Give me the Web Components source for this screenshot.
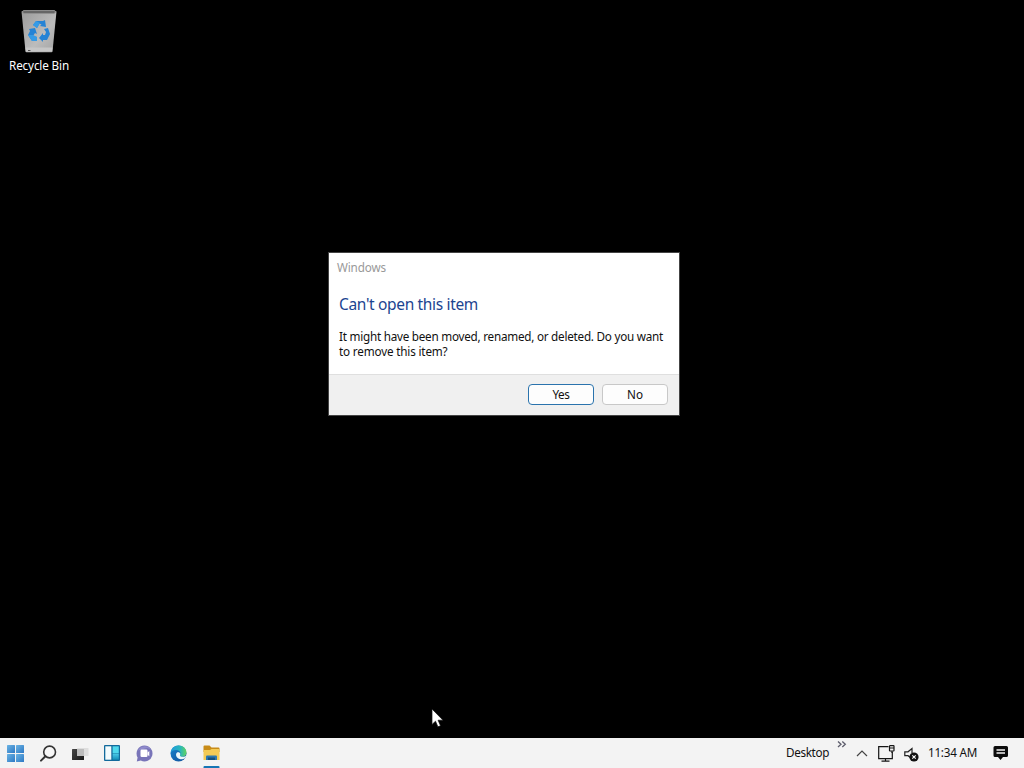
<!DOCTYPE html>
<html lang="en">
<head>
<meta charset="utf-8">
<title>Desktop</title>
<style>
html,body{margin:0;height:100%;overflow:hidden;background:#000}
body{font-family:"Noto Sans","Open Sans",sans-serif;font-size:11.7px}
</style>
</head>
<body>
<desk-top></desk-top>
<script>
const define = (name, html, init) => {
  const t = document.createElement('template');
  t.innerHTML = html;
  customElements.define(name, class extends HTMLElement {
    constructor() {
      super();
      this.attachShadow({mode: 'open'}).append(t.content.cloneNode(true));
    }
    connectedCallback() { if (init) init.call(this); }
  });
};

const icons = {
  start: `<svg width="17" height="17" viewBox="0 0 17 17"><defs><linearGradient id="g" x2="1" y2="1"><stop stop-color="#6bb4e4"/><stop offset="1" stop-color="#2d78c4"/></linearGradient></defs><g fill="url(#g)"><rect width="8" height="8" rx=".5"/><rect x="9" width="8" height="8" rx=".5"/><rect y="9" width="8" height="8" rx=".5"/><rect x="9" y="9" width="8" height="8" rx=".5"/></g></svg>`,
  search: `<svg width="17" height="17" viewBox="0 0 17 17"><circle cx="9.6" cy="7" r="5.9" fill="#f7f7f7" stroke="#333" stroke-width="1.6"/><path d="M5.4 11.200 1 15.6" stroke="#333" stroke-width="2" stroke-linecap="round"/></svg>`,
  tasks: `<svg width="17" height="12" viewBox="0 0 17 12"><defs><linearGradient id="a" x2="1" y2="1"><stop stop-color="#454545"/><stop offset="1" stop-color="#191919"/></linearGradient></defs><rect y="1" width="12" height="11" rx=".6" fill="url(#a)"/><rect x="5" width="11.500" height="8" rx=".6" fill="#dedede"/><path d="M5 1h7v7H5z" fill="#bcbcbc"/></svg>`,
  widgets: `<svg width="16" height="16" viewBox="0 0 16 16"><defs><linearGradient id="w" x2="0" y2="1"><stop stop-color="#47c6e5"/><stop offset="1" stop-color="#148fb8"/></linearGradient></defs><rect width="16" height="16" rx="1" fill="#126a9c"/><rect x="1.300" y="1.300" width="6" height="13.400" fill="#f3fbfd"/><rect x="8.600" y="1.300" width="6.200" height="7.200" fill="#4fd8ec"/><rect x="8.600" y="9" width="6.200" height="5.700" fill="url(#w)"/></svg>`,
  chat: `<svg width="17" height="17" viewBox="0 0 17 17"><path d="M8.500.5a8 8 0 1 1-3.700 15.100L.8 16.500l.8-4A8 8 0 0 1 8.500.5z" fill="#7874b8"/><path d="M2 5.500A7.500 7.500 0 0 1 15 4.500L11 3z" fill="#8f8acb"/><rect x="4.500" y="4.500" width="7" height="7.500" rx="1.200" fill="#fff"/><path d="m11.500 7.400 1.800-1.500v5.300l-1.800-1.500z" fill="#fff"/></svg>`,
  edge: `<svg width="17" height="17" viewBox="0 0 17 17"><defs><linearGradient id="e" x1="0" x2="1"><stop stop-color="#2198dc"/><stop offset=".6" stop-color="#27b7bb"/><stop offset="1" stop-color="#63d35c"/></linearGradient><linearGradient id="f" x2="1" y2="1"><stop stop-color="#1683ce"/><stop offset="1" stop-color="#124f99"/></linearGradient></defs><circle cx="8.500" cy="8.500" r="8" fill="url(#f)"/><path d="M.6 8C1 3.500 4.200.5 8.500.5c4.800 0 8 3.300 8 7 0 2.800-2 4.300-4.400 4.300-1.600 0-2.500-.6-2.500-1.300s.9-.9.9-2.100C10.500 6.500 8.600 5 6 5 3.300 5 1.300 6.300.6 8z" fill="url(#e)"/><path d="M7 7.600c-1.900 1.600-.9 5.700 2.600 6.500 2 .5 4.100-.1 5.700-1.100l1.200-2.500c-1.400 1.300-4 1.600-5.600 1-1.500-.5-.8-1.300-.6-2.400C10.500 7.500 8 7 7 7.600z" fill="#eaf6fa"/></svg>`,
  files: `<svg width="17" height="24" viewBox="0 0 17 24"><path d="M.5 1.500q0-1 1-1h5l2 2h7q1 0 1 1V7H.5z" fill="#c88b18"/><path d="M.5 5H7l1.500-1h7q1 0 1 1v10H.5z" fill="#f3cb55"/><path d="M3 15V11.500q0-1 1-1h9q1 0 1 1V15z" fill="#2a78b0"/><path d="M5 12.500h7V15H5z" fill="#16507c"/><rect y="21" x=".5" width="16" height="2.500" rx="1" fill="#1676b5"/></svg>`,
  more: `<svg width="10" height="7" viewBox="0 0 10 7" fill="none" stroke="#5d5d6c" stroke-width="1.300"><path d="m1 .6 3 2.700-3 2.700M5.300.6l3 2.700-3 2.700"/></svg>`,
  up: `<svg width="12" height="7" viewBox="0 0 12 7"><path d="m1 6 5-5 5 5" fill="none" stroke="#444" stroke-width="1.200"/></svg>`,
  network: `<svg width="17" height="17" viewBox="0 0 17 17" fill="none" stroke="#151515" stroke-width="1.200"><path d="M10.500 1.600H.7v12h13.600V7M7.500 13.600v2.500M3.500 16.200h8"/><rect x="11.500" y=".7" width="4.500" height="5.300" rx=".5"/><path d="M11.500 3H16M14 6v2"/></svg>`,
  volume: `<svg width="15" height="15" viewBox="0 0 15 15"><path d="M7 11 4 8.700H.8V4.800H4l4-3.300V6" fill="none" stroke="#222" stroke-width="1.200"/><circle cx="10" cy="10" r="4.600" fill="#111"/><path d="m8.300 8.300 3.400 3.400m0-3.400-3.400 3.400" stroke="#fff" stroke-width="1.100"/></svg>`,
  notice: `<svg width="16" height="16" viewBox="0 0 16 16"><path d="M2 1h11.500q1.500 0 1.500 1.500v8q0 1.500-1.500 1.500H10l-2.500 3L5 12H2Q.5 12 .5 10.500v-8Q.5 1 2 1z" fill="#0c0c0c"/><path d="M3.500 5h8.500M3.500 8h8.500" stroke="#f3f3f3" stroke-width="1.300"/></svg>`,
  bin: `<svg width="36" height="43" viewBox="0 0 36 43"><defs><linearGradient id="b" x2="1" y2="1"><stop stop-color="#9a9a9a"/><stop offset=".6" stop-color="#bcbcbc"/><stop offset="1" stop-color="#a2a2a2"/></linearGradient></defs><path d="m.5 1.500 4 40q.1.800 1 .8h25q.9 0 1-.8l4-40L33 .3H3z" fill="url(#b)"/><path d="M1 1.800 3 .5h30l2 1.300-2 1.700H3z" fill="#666" stroke="#929292" stroke-width=".8"/><path d="m4.500 37.500.4 4h26.200l.4-4z" fill="#c6c6c6"/><path d="M7 40.500h2.500" stroke="#555"/><g transform="translate(0 1)"><g fill="#2583d5"><path d="m12 14 3-4h7l2-1 1 7-6-1 1.500-1.500-2-1L16 17z"/><path d="m8 18 6-1 2 6-2-1-2 3 4 1v4h-5l-4-6 2-4z"/><path d="m23 18 4-1 2 6-3 6h-4v2l-4-4 4-5v2h2l1-3z"/></g><path d="m15 10 4 2-3 5-4-3zM7 24h5l4 2v4h-5z" fill="#369be6"/></g></svg>`,
  cursor: `<svg width="13" height="21" viewBox="0 0 13 21"><path d="M1 1v15.500l3.500-3.300 2.400 5.600 2.600-1.100-2.400-5.500H12z" fill="#fff" stroke="#111" stroke-width=".7"/></svg>`
};

define('ui-icon', `<style>:host{display:block;flex:none}svg{display:block}</style><div></div>`, function () {
  this.shadowRoot.querySelector('div').innerHTML = icons[this.getAttribute('name')];
});

// A single line of text, tracked to occupy the width given in "w".
define('ui-text', `<style>:host{display:block;flex:none;white-space:nowrap}span{display:inline-block}</style><span><slot></slot></span>`, function () {
  const w = +this.getAttribute('w'), s = this.shadowRoot.querySelector('span');
  const n = this.textContent.length;
  s.style.letterSpacing = (w - s.getBoundingClientRect().width) / n + 'px';
  this.style.width = w + 'px';
});

define('desktop-item', `<style>
:host{display:flex;flex-direction:column;align-items:center;width:60px;color:#fff;line-height:16px;gap:4px}
</style><ui-icon name="bin"></ui-icon><slot></slot>`);

define('dialog-button', `<style>
:host{display:flex;box-sizing:border-box;width:66px;height:21px;justify-content:center;align-items:center;border:1px solid #c8c8c8;border-radius:4px;background:#fdfdfd;color:#111;line-height:17px}
:host([primary]){border-color:#2a73ad}
</style><slot></slot>`);

define('message-dialog', `<style>
:host{display:flex;flex-direction:column;box-sizing:border-box;width:352px;height:164px;border:1px solid #444;background:#fff}
header{padding:5px 8px 1px;line-height:18px;color:#999}
main{flex:1;padding:15px 10px 0;line-height:15px;color:#111}
h1{margin:0 0 13px;font-size:15.5px;font-weight:400;line-height:24px;color:#1c4490}
footer{display:flex;box-sizing:border-box;height:41px;padding:9px 11px 0;gap:8px;justify-content:flex-end;background:#f0f0f0;border-top:1px solid #dfdfdf}
</style>
<header><ui-text w="49">Windows</ui-text></header>
<main><h1><ui-text w="139">Can't open this item</ui-text></h1>
<ui-text w="324">It might have been moved, renamed, or deleted. Do you want</ui-text>
<ui-text w="108.500">to remove this item?</ui-text></main>
<footer><dialog-button primary><ui-text w="17">Yes</ui-text></dialog-button><dialog-button><ui-text w="16">No</ui-text></dialog-button></footer>`);

define('task-bar', `<style>
:host{display:flex;box-sizing:border-box;height:30px;background:#f3f3f3;color:#111;justify-content:space-between;padding:0 15px 0 7px}
nav,aside{display:flex;align-items:center}
nav{gap:15px}
aside{line-height:18px}
aside ui-text{padding-bottom:2px}
.search{margin-left:1px}
.tasks{margin-top:2px}
.chat{margin-left:.5px}
.edge{margin-left:2.5px}
.files{align-self:flex-start;margin-top:7px;margin-left:1px}
</style>
<nav>
<ui-icon name="start"></ui-icon><ui-icon class="search" name="search"></ui-icon><ui-icon class="tasks" name="tasks"></ui-icon><ui-icon name="widgets"></ui-icon><ui-icon class="chat" name="chat"></ui-icon><ui-icon class="edge" name="edge"></ui-icon><ui-icon class="files" name="files"></ui-icon>
</nav>
<aside>
<ui-text w="43">Desktop</ui-text>
<ui-icon name="more" style="margin:0 9px 17px 8px"></ui-icon>
<ui-icon name="up" style="margin-right:10px"></ui-icon>
<ui-icon name="network" style="margin-right:9px"></ui-icon>
<ui-icon name="volume" style="margin:2px 9px 0 0"></ui-icon>
<ui-text w="49">11:34 AM</ui-text>
<ui-icon name="notice" style="margin-left:16px"></ui-icon>
</aside>`);

define('desk-top', `<style>
:host{display:flex;flex-direction:column;position:relative;width:1024px;height:768px;background:#000}
.space{flex:1;padding:10px 9px}
message-dialog{position:absolute;left:328px;top:252px}
.cursor{position:absolute;left:431px;top:708px}
</style>
<div class="space"><desktop-item><ui-text w="60">Recycle Bin</ui-text></desktop-item></div>
<task-bar></task-bar>
<message-dialog></message-dialog>
<ui-icon class="cursor" name="cursor"></ui-icon>`);
</script>
</body>
</html>
